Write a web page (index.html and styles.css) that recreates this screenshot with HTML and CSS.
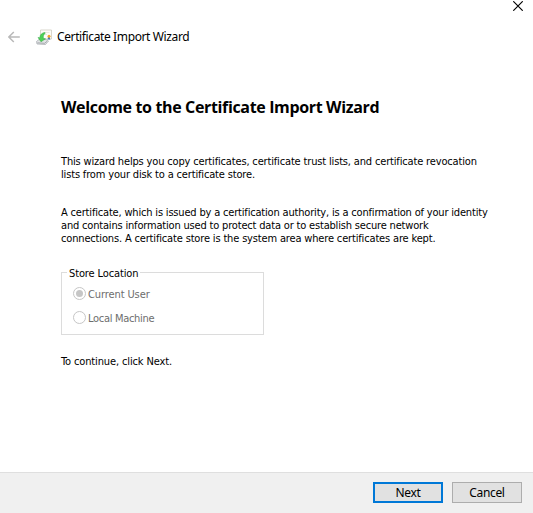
FILE: index.html
```html
<!DOCTYPE html>
<html lang="en">
<head>
<meta charset="utf-8">
<title>Certificate Import Wizard</title>
<link rel="stylesheet" href="styles.css">
</head>
<body>
<div class="wizard">
  <div class="titlebar">
    <svg class="close" width="10" height="10" viewBox="0 0 10 10"><path d="M.3.3l9.4 9.4M9.7.3L.3 9.7" stroke="#000" stroke-width="1.15" fill="none"/></svg>
  </div>
  <header class="header">
    <svg class="back" width="12" height="12" viewBox="0 0 12 12"><path d="M11.8 6H1M5.8 1L.8 6l5 5" stroke="#b9b9b9" stroke-width="1.5" fill="none"/></svg>
    <svg class="cert" width="16" height="17" viewBox="0 0 16 17">
      <path d="M4.500 1h11v9h-11z" fill="#fdfcf8" stroke="#cfccc0" stroke-width=".8"/>
      <path d="M7.500 3.500h6M9 5.500h2" stroke="#e4e1d8" stroke-width=".8"/>
      <path d="M.5 12.500L3 10.500h7l2.500 1.500-3 3.500L1 15z" fill="#e2e4e6" stroke="#a4a8ac" stroke-width=".7"/>
      <path d="M1.500 13.800l7 .5 2.500-2" stroke="#8f9498" stroke-width=".7" fill="none"/>
      <path d="M8.800 3.500C6 3.800 4 5.500 3.800 8.700L2 8.500l3 4.300 4.500-3-2.200-.5C7.200 7 7.600 5.200 9.300 4.200z" fill="#4ccf55" stroke="#35ab45" stroke-width=".5"/>
      <path d="M12 8l-.4 3 1.300-.7 1.300.7-.3-3z" fill="#4b79b5"/>
      <circle cx="13" cy="7.300" r="1.500" fill="#eda72c"/>
    </svg>
    <span class="caption">Certificate Import Wizard</span>
  </header>
  <main class="content">
    <h1>Welcome to the Certificate Import Wizard</h1>
    <p class="intro"><span class="l1">This wizard helps you copy certificates, certificate trust lists, and certificate revocation</span><br><span class="l1">lists from your disk to a certificate store.</span></p>
    <p class="about"><span class="l3">A certificate, which is issued by a certification authority, is a confirmation of your identity</span><br><span class="l3">and contains information used to protect data or to establish secure network</span><br><span class="l1">connections. A certificate store is the system area where certificates are kept.</span></p>
    <fieldset>
      <legend>Store Location</legend>
      <div class="option"><span class="radio checked"></span><span class="user">Current User</span></div>
      <div class="option"><span class="radio"></span><span class="machine">Local Machine</span></div>
    </fieldset>
    <p class="hint">To continue, click Next.</p>
  </main>
  <footer>
    <button class="default">Next</button>
    <button>Cancel</button>
  </footer>
</div>
</body>
</html>
```
FILE: styles.css
```css
* { box-sizing: border-box; }
body { margin: 0; background: #fff; color: #000; font: 11px/13px "DejaVu Sans Condensed", "DejaVu Sans", sans-serif; font-stretch: condensed; }
.wizard { width: 533px; height: 513px; display: flex; flex-direction: column; white-space: nowrap; overflow: hidden; }
svg { display: block; flex: none; }
.titlebar { height: 24px; display: flex; justify-content: flex-end; padding: 1px 10px 0 0; }
.header { height: 26px; display: flex; align-items: center; padding-left: 8px; }
.cert { margin-left: 16px; }
.caption { margin-left: 5px; font: 12px/16px "Noto Sans", sans-serif; letter-spacing: -.38px; }
.content { flex: 1; padding: 46px 0 0 61px; }
h1 { margin: 0; font: bold 16px/22px "Open Sans", sans-serif; letter-spacing: -.35px; }
p { margin: 0; }
.l1 { letter-spacing: -.16px; }
.l3 { letter-spacing: -.18px; }
.intro { margin-top: 37px; }
.about { margin-top: 25px; }
fieldset { position: relative; width: 203px; height: 63px; margin: 27px 0 0; padding: 14px 0 0 11px; border: 1px solid #dcdcdc; }
legend { position: absolute; left: 5px; top: -6px; padding: 0 2px; background: #fff; line-height: 13px; letter-spacing: -.12px; }
.option { height: 14px; display: flex; align-items: center; gap: 2px; color: #6d6d6d; }
.option + .option { margin-top: 10px; }
.user { letter-spacing: -.1px; }
.machine { letter-spacing: -.3px; }
.radio { width: 13px; height: 13px; margin-top: -1px; border: 1px solid #c6c6c6; border-radius: 50%; display: grid; place-items: center; }
.checked::after { content: ""; width: 7px; height: 7px; border-radius: 50%; background: #c6c6c6; }
.hint { margin-top: 20px; letter-spacing: -.13px; }
footer { height: 41px; background: #f0f0f0; border-top: 1px solid #dfdfdf; display: flex; justify-content: flex-end; gap: 9px; padding: 9px 11px 0 0; }
button { width: 70px; height: 21px; padding: 0; border: 1px solid #adadad; background: #e1e1e1; color: #000; font: 12px/17px "Noto Sans", sans-serif; letter-spacing: -.35px; }
button.default { border: 2px solid #0078d7; }
```
